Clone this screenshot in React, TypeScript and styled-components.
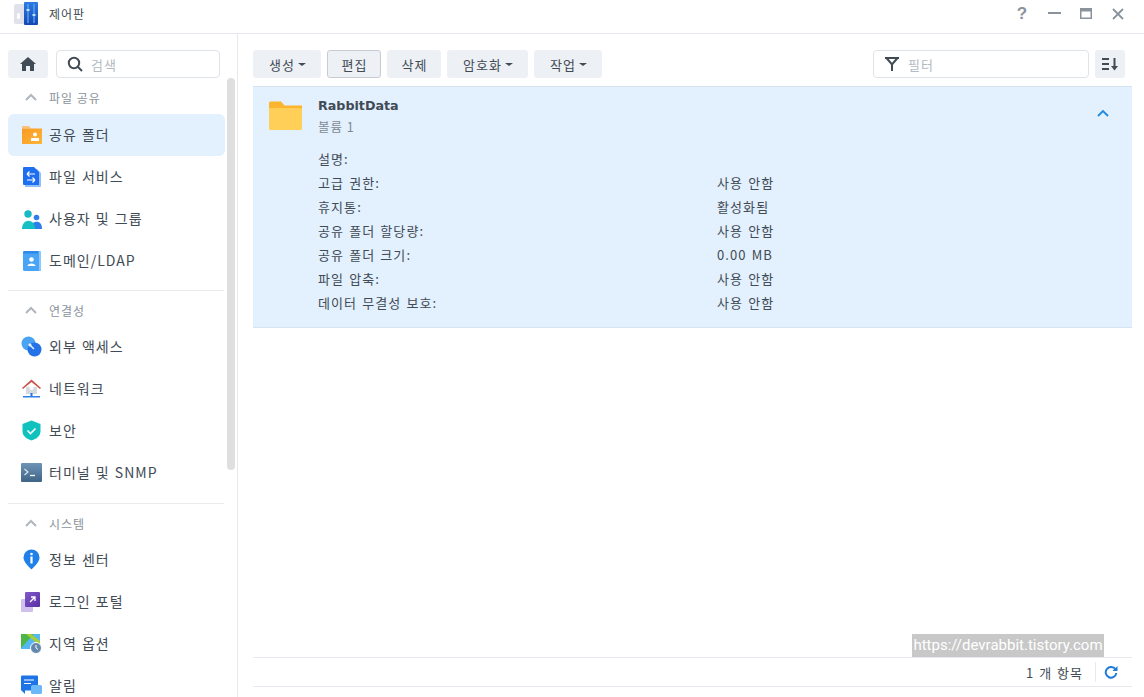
import React from 'react';
import styled, { createGlobalStyle } from 'styled-components';

const Global = createGlobalStyle`
  html, body { margin: 0; padding: 0; background: #fff; }
  body { font-family: "Noto Sans CJK KR", "Noto Sans", sans-serif; color: #414b55; }
  * { box-sizing: border-box; }
`;

const Win = styled.div`
  position: relative; width: 1144px; height: 697px; overflow: hidden; background: #fff;
  display: flex; flex-direction: column;
`;
const TitleBar = styled.header`
  height: 34px; flex: none; border-bottom: 1px solid #e6eaee;
  display: flex; align-items: center; padding: 0 10px 6px 14px;
`;
const AppTitle = styled.span`font-size: 12px; letter-spacing: 1px; margin-left: 10px; color: #414b55; flex: 1;`;
const WinBtn = styled.span`
  width: 32px; height: 20px; display: flex; align-items: center; justify-content: center;
  color: #8a939c; font-size: 17px; font-weight: 700; font-family: "Liberation Sans", sans-serif;
`;
const Body = styled.div`flex: 1; display: flex; min-height: 0;`;
const Sidebar = styled.aside`
  width: 238px; flex: none; border-right: 1px solid #e6eaee; position: relative;
  padding: 16px 0 0 8px; overflow: hidden;
`;
const SideInner = styled.div`width: 217px;`;
const SearchRow = styled.div`display: flex; gap: 8px; margin-bottom: 7px; width: 212px;`;
const HomeBtn = styled.div`
  width: 40px; height: 28px; border-radius: 3px; background: #edf0f4;
  display: flex; align-items: center; justify-content: center;
`;
const Input = styled.div<{ $w: number }>`
  width: ${p => p.$w}px; height: 28px; border: 1px solid #dfe4e9; border-radius: 4px; background: #fff;
  display: flex; align-items: center; font-size: 13px; letter-spacing: 1px; color: #b4bac1; gap: 8px; padding-left: 10px;
`;
const Section = styled.section<{ $pb: number }>`padding-bottom: ${p => p.$pb}px;`;
const Divider = styled.hr`border: 0; height: 1px; background: #e9ecef; margin: 0 0 7px; width: 216px;`;
const SectionHead = styled.div<{ $mb: number }>`
  height: 24px; display: flex; align-items: center; padding-left: 17px; gap: 12px;
  font-size: 12px; letter-spacing: 1px; color: #8a939c; margin-bottom: ${p => p.$mb}px;
`;
const Item = styled.div<{ $active?: boolean }>`
  height: 42px; border-radius: 6px; display: flex; align-items: center; padding: 0 0 2px 13px; gap: 7px;
  font-size: 14px; letter-spacing: 1px; word-spacing: 1px; color: #414b55; background: ${p => (p.$active ? '#e3f0fd' : 'transparent')};
`;
const IconBox = styled.span`width: 21px; height: 21px; flex: none; display: block; svg { display: block; }`;
const ScrollThumb = styled.div`
  position: absolute; left: 227px; top: 44px; width: 8px; height: 392px; border-radius: 4px; background: #dfdfdf;
`;
const Main = styled.main`flex: 1; min-width: 0; display: flex; flex-direction: column; padding: 16px 12px 10px 15px;`;
const Toolbar = styled.div`display: flex; align-items: center; gap: 6px; width: 872px; height: 28px; margin-bottom: 8px;`;
const Btn = styled.button<{ $w: number; $on?: boolean }>`
  width: ${p => p.$w}px; height: 28px; padding: 0 0 0 1px; border-radius: 3px; font: inherit; font-size: 13px; letter-spacing: 1px; color: #414b55;
  background: #edf0f4; border: 1px solid ${p => (p.$on ? '#c6ccd3' : '#edf0f4')};
  display: flex; align-items: center; justify-content: center; gap: 3px;
`;
const Caret = styled.i`
  width: 0; height: 0; border: 4px solid transparent; border-top: 3px solid #414b55; border-bottom: 0; display: block;
`;
const Spacer = styled.div`flex: 1;`;
const SortBtn = styled.div`
  width: 30px; height: 28px; border-radius: 3px; background: #edf0f4;
  display: flex; align-items: center; justify-content: center;
`;
const Row = styled.div`
  width: 879px; height: 242px; background: #e3f0fd; border-top: 1px solid #d6e4f1; border-bottom: 1px solid #d6e4f1;
  position: relative; padding: 9px 0 0 16px; display: flex; gap: 16px;
`;
const RowBody = styled.div`flex: 1;`;
const RowName = styled.div`font-family: "DejaVu Sans", sans-serif; font-weight: 700; font-size: 12.7px; line-height: 20px; color: #414b55;`;
const RowSub = styled.div`font-size: 12.5px; line-height: 20px; margin-top: 1px; color: #7f8992; letter-spacing: 1px;`;
const Details = styled.div`margin-top: 9px; display: grid; grid-template-columns: 399px 1fr; grid-auto-rows: 24px; align-items: center; font-size: 13px; letter-spacing: 1.1px; word-spacing: 1px; color: #414b55;`;
const Chevron = styled.span`position: absolute; right: 23px; top: 22px; display: block; line-height: 0;`;
const Fill = styled.div`flex: 1;`;
const Footer = styled.footer`
  height: 30px; width: 879px; border-top: 1px solid #e6eaee; border-bottom: 1px solid #e6eaee;
  display: flex; align-items: center; justify-content: flex-end; font-size: 13px; letter-spacing: 1px; word-spacing: 1px; color: #414b55; padding-right: 14px;
`;
const FootSep = styled.span`width: 1px; height: 20px; background: #e6eaee; margin: 0 8px 0 12px;`;
const Watermark = styled.div`
  position: absolute; left: 912px; top: 634px; width: 192px; height: 23px; background: #c8c8c8; color: #fff;
  font: 15px/23px Roboto, sans-serif; white-space: nowrap; text-align: center;
`;

const I = ({ children }: { children: React.ReactNode }) => (
  <IconBox><svg width="21" height="21" viewBox="0 0 21 21">{children}</svg></IconBox>
);

const icons: Record<string, React.ReactNode> = {
  share: <I>
    <defs><linearGradient id="gs" x1="0" y1="0" x2="1" y2="1"><stop offset="0" stopColor="#f99a22"/><stop offset="1" stopColor="#fcb53a"/></linearGradient></defs>
    <path d="M1 2h7l2 2.500H1z" fill="#f8c27a"/>
    <rect x="1" y="4.500" width="20" height="15.500" fill="url(#gs)"/>
    <circle cx="14" cy="10.500" r="2" fill="#fff"/><rect x="10" y="14" width="8" height="3" fill="#fff"/>
  </I>,
  file: <I>
    <path d="M4 3h12l4 4v13a1 1 0 0 1-1 1H4z" fill="#92bdf6"/>
    <path d="M2 2a1 1 0 0 1 1-1h10l5 5v13H3a1 1 0 0 1-1-1z" fill="#1e6ef0"/>
    <path d="M6 8h8M6 8l2.500-2.500M6 8l2.500 2.500M14 14H6M14 14l-2.500-2.500M14 14l-2.500 2.500" stroke="#fff" strokeWidth="1.200" fill="none"/>
  </I>,
  user: <I>
    <circle cx="7" cy="6" r="3.700" fill="#19b8c8"/><circle cx="15.500" cy="9.500" r="2.800" fill="#2f7fea"/>
    <path d="M11 21c-1-5 0-6 3-7 4-1 7 1 7 7z" fill="#2f7fea"/>
    <path d="M1 21c0-11 13-11 13 0z" fill="#15c0c4"/>
  </I>,
  domain: <I>
    <rect x="2" y="1" width="18" height="20" rx="1.500" fill="#4aa4f5"/>
    <path d="M2 2.500A1.500 1.500 0 0 1 3.500 1H17v2.500H2z" fill="#2f89e8"/>
    <path d="M18 1h.5A1.500 1.500 0 0 1 20 2.500V21h-2z" fill="#8ec8fa"/>
    <circle cx="10.500" cy="9.500" r="2.300" fill="#fff"/><path d="M6.500 16c0-3.500 8-3.500 8 0z" fill="#fff"/>
  </I>,
  ext: <I>
    <circle cx="7.500" cy="7.500" r="7" fill="#4ba3f3"/><circle cx="13.500" cy="13.500" r="7" fill="#2472e8"/>
    <path d="M8 8l5 5" stroke="#e8f2fd" strokeWidth="1.500"/><circle cx="9" cy="9" r="1.500" fill="#e8f2fd"/>
  </I>,
  net: <I>
    <path d="M5 9h11v7H5z" fill="#d5dade"/>
    <path d="M10.500 1.500L1 10l1 1 8.500-7 8.500 7 1-1z" fill="#c9534b"/>
    <circle cx="10.500" cy="10" r="2" fill="#fff"/>
    <path d="M10.500 15v3" stroke="#2472e8" strokeWidth="2"/>
    <rect x="2" y="18" width="17" height="1.500" fill="#2f7fea"/>
  </I>,
  sec: <I>
    <path d="M10.500 0.500L19.500 4v7c0 5-4 8-9 9.500-5-1.500-9-4.500-9-9.500V4z" fill="#10c2bd"/>
    <path d="M6.500 10.500l3 3 5-5" stroke="#fff" strokeWidth="1.600" fill="none"/>
  </I>,
  term: <I>
    <defs><linearGradient id="gt" x1="0" y1="0" x2="0" y2="1"><stop offset="0" stopColor="#6d93b5"/><stop offset="1" stopColor="#3e6488"/></linearGradient></defs>
    <rect x="0" y="1" width="21" height="19" rx="1" fill="url(#gt)"/>
    <path d="M3.500 7l3.500 3-3.500 3" stroke="#dfe6ec" strokeWidth="1.200" fill="none"/><path d="M9 13.500h5" stroke="#fff" strokeWidth="1.300"/>
  </I>,
  info: <I>
    <path d="M10.500 0.500a8 8 0 0 1 8 8c0 4.500-5 9-8 12-3-3-8-7.500-8-12a8 8 0 0 1 8-8z" fill="#1f80ea"/>
    <circle cx="10.500" cy="5" r="1.300" fill="#fff"/><rect x="9.400" y="7.500" width="2.200" height="7" fill="#fff"/>
  </I>,
  login: <I>
    <defs><linearGradient id="gl" x1="0" y1="0" x2="1" y2="1"><stop offset="0" stopColor="#8059c8"/><stop offset="1" stopColor="#5a2ea6"/></linearGradient></defs>
    <rect x="0" y="8" width="12" height="13" rx="1" fill="#cfc0ec"/>
    <rect x="4" y="1" width="15" height="15" rx="1" fill="url(#gl)"/>
    <path d="M9 11l5-5M10 6h4v4" stroke="#fff" strokeWidth="1.300" fill="none"/>
  </I>,
  region: <I>
    <path d="M0 1h19v15H0z" fill="#56b8f3"/>
    <path d="M0 1h13L0 15z" fill="#4cb748"/>
    <path d="M0 1l5 0 14 12v-5L10 1z" fill="#a6cf3c"/>
    <circle cx="15" cy="15" r="5.500" fill="#6487ac" stroke="#fff"/>
    <path d="M15 12v3l2 1.500" stroke="#fff" fill="none"/>
  </I>,
  bell: <I>
    <rect x="0" y="0.500" width="17" height="15" rx="1" fill="#1d74e6"/>
    <path d="M3 5h10M3 8.500h7" stroke="#fff" strokeWidth="1.200"/>
    <path d="M0 15h4v4z" fill="#1d74e6"/>
    <rect x="10" y="10" width="11" height="9" rx="1.500" fill="#6db8f8"/>
  </I>,
};

const Up = ({ c = '#b0b6bd', s = 2 }: { c?: string; s?: number }) => (
  <svg width="12" height="8" viewBox="0 0 12 8"><path d="M1 7l5-5 5 5" stroke={c} strokeWidth={s} fill="none"/></svg>
);

const sections = [
  { title: '파일 공유', mb: 5, pb: 8, items: [['share', '공유 폴더', true], ['file', '파일 서비스'], ['user', '사용자 및 그룹'], ['domain', '도메인/LDAP']] },
  { title: '연결성', mb: 4, pb: 9, items: [['ext', '외부 액세스'], ['net', '네트워크'], ['sec', '보안'], ['term', '터미널 및 SNMP']] },
  { title: '시스템', mb: 4, pb: 8, items: [['info', '정보 센터'], ['login', '로그인 포털'], ['region', '지역 옵션'], ['bell', '알림']] },
];
const details = [
  ['설명:', ''], ['고급 권한:', '사용 안함'], ['휴지통:', '활성화됨'], ['공유 폴더 할당량:', '사용 안함'],
  ['공유 폴더 크기:', '0.00 MB'], ['파일 압축:', '사용 안함'], ['데이터 무결성 보호:', '사용 안함'],
];
const buttons: [string, number, boolean, boolean][] = [
  ['생성', 68, true, false], ['편집', 54, false, true], ['삭제', 54, false, false], ['암호화', 81, true, false], ['작업', 68, true, false],
];

export default function App() {
  return (
    <Win>
      <Global />
      <TitleBar>
        <svg width="25" height="23" viewBox="0 0 25 23">
          <defs><linearGradient id="gb" x1="0" y1="0" x2="0" y2="1"><stop offset="0" stopColor="#2d7be6"/><stop offset="1" stopColor="#1647b0"/></linearGradient></defs>
          <path d="M2 2h9v20H2a2 2 0 0 1-2-2V4a2 2 0 0 1 2-2z" fill="#dfe2ea"/>
          <rect x="3" y="11" width="3" height="6" rx="1.500" fill="#fff"/>
          <rect x="10" y="0" width="14" height="23" rx="1" fill="url(#gb)"/>
          <path d="M14 2v19M20 2v19" stroke="#5da8f0" strokeWidth="1.300"/>
          <path d="M12.500 8h3M18.500 13h3" stroke="#bfe0fb" strokeWidth="2"/>
        </svg>
        <AppTitle>제어판</AppTitle>
        <WinBtn>?</WinBtn>
        <WinBtn><svg width="13" height="3"><rect width="13" height="2" fill="#8a939c"/></svg></WinBtn>
        <WinBtn><svg width="12" height="11" viewBox="0 0 12 11"><rect x=".75" y=".75" width="10.500" height="9.500" fill="none" stroke="#8a939c" strokeWidth="1.500"/><rect width="12" height="3.500" fill="#8a939c"/></svg></WinBtn>
        <WinBtn><svg width="12" height="12" viewBox="0 0 12 12"><path d="M1 1l10 10M11 1L1 11" stroke="#8a939c" strokeWidth="1.800"/></svg></WinBtn>
      </TitleBar>
      <Body>
        <Sidebar>
          <SideInner>
            <SearchRow>
              <HomeBtn><svg width="16" height="14" viewBox="0 0 16 14"><path d="M8 0L0 7h2v7h4V9h4v5h4V7h2z" fill="#414b55"/></svg></HomeBtn>
              <Input $w={164}>
                <svg width="16" height="16" viewBox="0 0 16 16"><circle cx="7" cy="7" r="5.200" fill="none" stroke="#414b55" strokeWidth="2"/><path d="M11 11l4 4" stroke="#414b55" strokeWidth="2"/></svg>
                검색
              </Input>
            </SearchRow>
            {sections.map((s, i) => (
              <React.Fragment key={s.title}>
                {i > 0 && <Divider />}
                <Section $pb={s.pb}>
                  <SectionHead $mb={s.mb}><Up />{s.title}</SectionHead>
                  {s.items.map(it => (
                    <Item key={it[1] as string} $active={!!it[2]}>
                      {icons[it[0] as string]}
                      {it[1]}
                    </Item>
                  ))}
                </Section>
              </React.Fragment>
            ))}
          </SideInner>
          <ScrollThumb />
        </Sidebar>
        <Main>
          <Toolbar>
            {buttons.map(([t, w, caret, on]) => (
              <Btn key={t} $w={w} $on={on}>{t}{caret && <Caret />}</Btn>
            ))}
            <Spacer />
            <Input $w={216}>
              <svg width="16" height="16" viewBox="0 0 16 16"><path d="M1 2h14M2.500 2L8 8.500 13.500 2M8 8v7" stroke="#414b55" strokeWidth="2" fill="none"/></svg>
              필터
            </Input>
            <SortBtn>
              <svg width="17" height="14" viewBox="0 0 17 14"><path d="M0 2h7M0 7h7M0 12h7" stroke="#414b55" strokeWidth="2"/><path d="M12.500 1v9" stroke="#414b55" strokeWidth="2"/><path d="M9 9h7l-3.500 4.500z" fill="#414b55"/></svg>
            </SortBtn>
          </Toolbar>
          <Row>
            <svg width="33" height="30" viewBox="0 0 33 30" style={{ flex: 'none', marginTop: 5 }}>
              <path d="M0 2a1.500 1.500 0 0 1 1.500-1.500H12l3.500 4H33V9H0z" fill="#fbb52f"/>
              <rect y="7" width="33" height="22" rx="1.500" fill="#ffcf58"/>
            </svg>
            <RowBody>
              <RowName>RabbitData</RowName>
              <RowSub>볼륨 1</RowSub>
              <Details>
                {details.map(([k, v]) => (
                  <React.Fragment key={k}><span>{k}</span><span>{v}</span></React.Fragment>
                ))}
              </Details>
            </RowBody>
            <Chevron><Up c="#1f8ae0" s={1.800} /></Chevron>
          </Row>
          <Fill />
          <Footer>
            1 개 항목
            <FootSep />
            <svg width="14" height="14" viewBox="0 0 14 14"><path d="M11.500 4.500A5.300 5.300 0 1 0 12.300 8" fill="none" stroke="#1f7bd8" strokeWidth="2"/><path d="M13.500 1v5h-5z" fill="#1f7bd8"/></svg>
          </Footer>
        </Main>
      </Body>
      <Watermark>https://devrabbit.tistory.com</Watermark>
    </Win>
  );
}
